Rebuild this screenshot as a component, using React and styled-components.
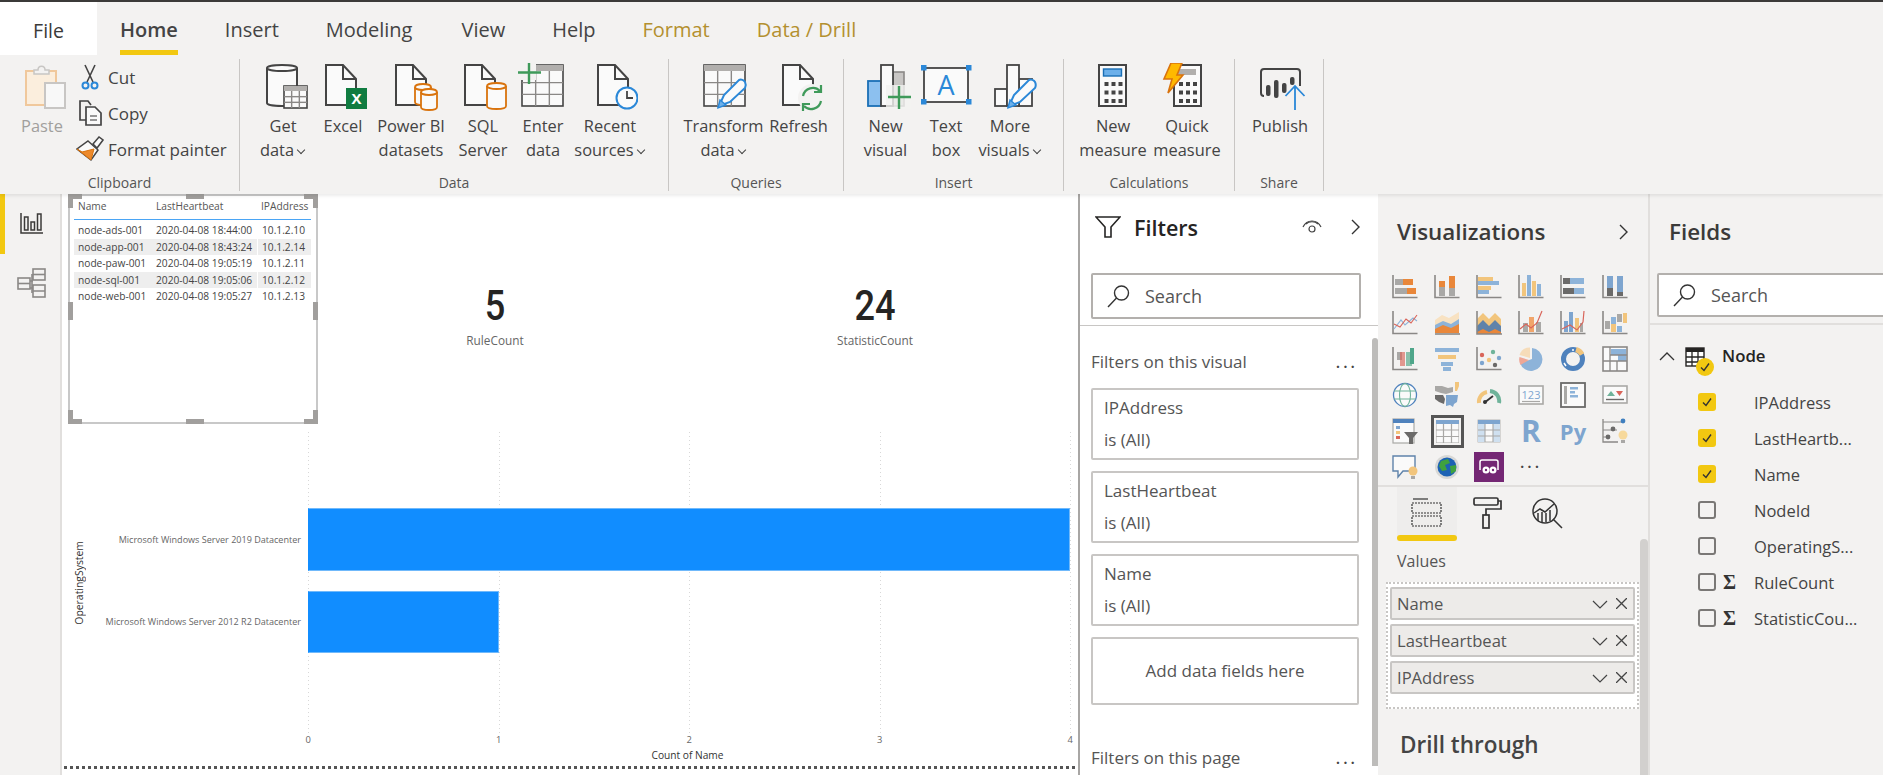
import styled, { createGlobalStyle } from "styled-components";

const GlobalStyle = createGlobalStyle`
  html, body {
    margin: 0;
    padding: 0;
    background: #fff;
    overflow: hidden;
  }
  * {
    box-sizing: border-box;
  }
  body {
    font-family: "Open Sans", "Noto Sans", sans-serif;
    color: #3b3a39;
  }
`;

const Page = styled.div`
  width: 1883px;
  height: 775px;
  display: flex;
  flex-direction: column;
  overflow: hidden;
`;

const Top = styled.header`
  height: 194px;
  background: #f3f2f1;
  border-top: 2px solid #3b3a39;
  box-shadow: 0 2px 3px rgba(0, 0, 0, 0.08);
  position: relative;
  z-index: 2;
`;

const Tabs = styled.nav`
  height: 53px;
  display: flex;
  align-items: stretch;
`;

const FileTab = styled.div`
  width: 97px;
  background: #fff;
  font-size: 19.500px;
  display: flex;
  align-items: center;
  justify-content: center;
  padding-top: 4px;
  margin-right: 23px;
`;

const Tab = styled.div`
  font-size: 20px;
  margin-right: ${(p) => p.$gap || 47}px;
  display: flex;
  align-items: center;
  padding-top: 6px;
  color: ${(p) => (p.$context ? "#b3902f" : "#444")};
  font-weight: ${(p) => (p.$active ? 600 : 400)};
  border-bottom: ${(p) => (p.$active ? "5px solid #f2c811" : "5px solid transparent")};
`;

const Ribbon = styled.div`
  height: 132px;
  margin-top: 4px;
  display: flex;
`;

const Group = styled.section`
  width: ${(p) => p.$w}px;
  border-right: 1px solid #c8c6c4;
  display: flex;
  flex-direction: column;
  height: 132px;
`;

const GroupBody = styled.div`
  flex: 1;
  display: flex;
  padding-left: ${(p) => p.$pad || 0}px;
  padding-top: 4px;
`;

const GroupName = styled.div`
  height: 16px;
  text-align: center;
  font-size: 14px;
  line-height: 16px;
  color: #555;
`;

const Btn = styled.div`
  width: ${(p) => p.$w}px;
  display: flex;
  flex-direction: column;
  align-items: center;
  flex-shrink: 0;
  font-size: 16.400px;
  line-height: 24px;
  text-align: center;
  white-space: nowrap;
  color: ${(p) => (p.$off ? "#a19f9d" : "#444")};
  svg {
    display: block;
    margin-bottom: 3px;
  }
`;

const Caret = styled.span`
  display: inline-block;
  width: 6px;
  height: 6px;
  border-right: 1.5px solid #444;
  border-bottom: 1.5px solid #444;
  transform: rotate(45deg);
  margin: 0 2px 3px 4px;
`;

const SmallStack = styled.div`
  display: flex;
  flex-direction: column;
  margin-top: -4px;
`;

const SmallBtn = styled.div`
  height: 36px;
  display: flex;
  align-items: center;
  font-size: 17px;
  color: #444;
  white-space: nowrap;
  svg {
    width: 28px;
    margin: 0 4px 0 6px;
    flex-shrink: 0;
  }
`;

const Body = styled.main`
  flex: 1;
  display: flex;
  min-height: 0;
`;

const Rail = styled.aside`
  width: 62px;
  background: #f3f2f1;
  border-right: 2px solid #e1dfdd;
  display: flex;
  flex-direction: column;
`;

const RailItem = styled.div`
  height: ${(p) => (p.$active ? 60 : 58)}px;
  display: flex;
  align-items: center;
  justify-content: center;
  border-left: 5px solid ${(p) => (p.$active ? "#f2c811" : "transparent")};
  padding-right: 2px;
`;

const Canvas = styled.div`
  width: 1016px;
  background: #fff;
  display: flex;
  flex-direction: column;
  overflow: hidden;
`;

const TopVisuals = styled.div`
  display: flex;
  height: 230px;
  flex-shrink: 0;
`;

const Frame = styled.div`
  width: 250px;
  height: 230px;
  margin-left: 6px;
  border: 2px solid #c8c8c8;
  position: relative;
  padding: 0 5px 0 4px;
  flex-shrink: 0;
`;

const handlePlaces = {
  tl: "top:-2px;left:-2px;width:14px;height:14px;border-top:5px solid;border-left:5px solid;",
  tr: "top:-2px;right:-2px;width:14px;height:14px;border-top:5px solid;border-right:5px solid;",
  bl: "bottom:-2px;left:-2px;width:14px;height:14px;border-bottom:5px solid;border-left:5px solid;",
  br: "bottom:-2px;right:-2px;width:14px;height:14px;border-bottom:5px solid;border-right:5px solid;",
  t: "top:-2px;left:116px;width:18px;height:5px;background:#a19f9d;",
  b: "bottom:-2px;left:116px;width:18px;height:5px;background:#a19f9d;",
  l: "top:106px;left:-2px;width:5px;height:18px;background:#a19f9d;",
  r: "top:106px;right:-2px;width:5px;height:18px;background:#a19f9d;",
};

const Handle = styled.i`
  position: absolute;
  ${(p) => handlePlaces[p.$at]}
  border-color: #a19f9d;
`;

const TableRow = styled.div`
  display: grid;
  grid-template-columns: 78px 105px 54px;
  height: ${(p) => (p.$head ? 24 : 16.5)}px;
  font-size: 10.2px;
  color: ${(p) => (p.$head ? "#555" : "#444")};
  white-space: nowrap;
  align-items: center;
  ${(p) => p.$head && "border-bottom: 1px solid #4aa5f5; margin-bottom: 2px; padding-bottom: 4px;"}
  background: ${(p) => (p.$shade ? "#eeeeee" : "transparent")};
`;

const Cell = styled.span`
  padding-left: 4px;
  height: 100%;
  display: flex;
  align-items: center;
  border-left: ${(p) => (p.$split ? "1px solid #fff" : "none")};
`;

const Cards = styled.div`
  display: grid;
  grid-template-columns: 354px 406px;
`;

const KpiCard = styled.div`
  padding-top: 87px;
  text-align: center;
`;

const KpiValue = styled.div`
  font-family: "Roboto", sans-serif;
  font-size: 42px;
  font-weight: 500;
  line-height: 50px;
  color: #252423;
  transform: scaleX(0.86);
`;

const KpiLabel = styled.div`
  font-size: 11.800px;
  line-height: 14px;
  margin-top: 2px;
  color: #666;
`;

const Chart = styled.div`
  flex: 1;
  display: flex;
  flex-direction: column;
  padding-top: 8px;
`;

const ChartMain = styled.div`
  height: 301px;
  flex-shrink: 0;
  display: flex;
  position: relative;
`;

const AxisTitle = styled.div`
  width: 34px;
  padding-left: 10px;
  display: flex;
  align-items: center;
  justify-content: flex-start;
  span {
    writing-mode: vertical-rl;
    transform: rotate(180deg);
    font-size: 10.4px;
    color: #333;
  }
`;

const Rows = styled.div`
  flex: 1;
  position: relative;
  padding-top: 76px;
  display: flex;
  flex-direction: column;
  gap: 20px;
`;

const GridLine = styled.i`
  position: absolute;
  top: 0;
  bottom: 0;
  left: ${(p) => 212 + p.$n * 190.5}px;
  width: 1px;
  background: repeating-linear-gradient(180deg, #d8d8d8 0 1px, transparent 1px 4px);
`;

const BarRow = styled.div`
  display: grid;
  grid-template-columns: 205px 1fr;
  column-gap: 7px;
  align-items: center;
  height: 62.5px;
  position: relative;
`;

const BarLabel = styled.div`
  font-size: 9.050px;
  color: #666;
  text-align: right;
  white-space: nowrap;
  direction: rtl;
`;

const Bar = styled.div`
  height: 100%;
  background: #118dff;
  border: 1px solid #70b9fb;
  border-left-color: #118dff;
`;

const Ticks = styled.div`
  display: flex;
  padding-left: 151px;
  height: 14px;
  margin-top: 1px;
`;

const TickItem = styled.div`
  flex: 0 0 190.5px;
  text-align: center;
  font-size: 9.4px;
  line-height: 12px;
  color: #666;
`;

const XTitle = styled.div`
  text-align: center;
  padding-left: 235px;
  font-size: 10.2px;
  line-height: 14px;
  color: #333;
`;

const DotLine = styled.div`
  height: 3px;
  margin: 4px 2px 0 2px;
  background: repeating-linear-gradient(90deg, #555 0 3px, transparent 3px 6px);
`;

const FilterPane = styled.section`
  width: 300px;
  background: #fff;
  border-left: 2px solid #a8a6a4;
  position: relative;
  overflow: hidden;
`;

const FilterHead = styled.div`
  height: 66px;
  display: flex;
  align-items: center;
  padding: 0 14px 0 15px;
`;

const FilterTitle = styled.h2`
  margin: 0 0 0 13px;
  font-size: 21.500px;
  font-weight: 600;
  color: #252423;
  flex: 1;
`;

const EyeGap = styled.span`
  width: 26px;
`;

const SearchBox = styled.div`
  height: ${(p) => p.$h}px;
  margin: ${(p) => p.$margin};
  display: flex;
  align-items: center;
  background: #fff;
  border: 2px solid #b3b0ad;
  border-radius: 2px;
  padding-left: 14px;
  font-size: 18px;
  color: #555;
  svg {
    margin-right: 14px;
  }
`;

const Rule = styled.div`
  height: ${(p) => p.$h || 1}px;
  background: ${(p) => p.$color};
`;

const FilterBody = styled.div`
  padding: 24px 16px 0 11px;
`;

const SectionRow = styled.div`
  height: 22px;
  display: flex;
  justify-content: space-between;
  align-items: center;
  font-size: 17px;
  color: #555;
  padding-right: 4px;
  margin-top: ${(p) => p.$top || 0}px;
  white-space: nowrap;
`;

const Dots = styled.span`
  font-size: 16px;
  font-weight: 600;
  letter-spacing: 3px;
  line-height: 10px;
  padding-top: ${(p) => p.$drop || 0}px;
  margin-bottom: ${(p) => p.$lift || 0}px;
  color: #444;
`;

const FilterCards = styled.div`
  margin-top: 16px;
  display: flex;
  flex-direction: column;
  gap: 11px;
`;

const FilterCard = styled.div`
  height: ${(p) => (p.$add ? 68 : 72)}px;
  width: 268px;
  border: 2px solid #c8c6c4;
  border-radius: 2px;
  padding: ${(p) => (p.$add ? "0" : "2px 11px 0")};
  font-size: 17px;
  line-height: 32px;
  color: #555;
  ${(p) => p.$add && "display:flex;align-items:center;justify-content:center;"}
`;

const ScrollThumb = styled.i`
  position: absolute;
  right: 0;
  top: ${(p) => p.$top}px;
  bottom: ${(p) => p.$bottom || 0}px;
  width: ${(p) => p.$w}px;
  border-radius: 4px 4px 0 0;
  background: ${(p) => p.$color};
`;

const VizPane = styled.section`
  width: 272px;
  background: #f3f2f1;
  border-right: 2px solid #e1dfdd;
  position: relative;
  overflow: hidden;
`;

const PaneHead = styled.div`
  height: 75px;
  display: flex;
  align-items: center;
  justify-content: space-between;
  padding: ${(p) => p.$pad};
`;

const PaneTitle = styled.h2`
  margin: 0;
  font-size: 22.400px;
  font-weight: 600;
  color: #3b3a39;
`;

const VizGrid = styled.div`
  display: grid;
  grid-template-columns: repeat(6, 42px);
  grid-auto-rows: 36px;
  place-items: center;
  padding-left: 6px;
  height: 216px;
`;

const VizCell = styled.div`
  display: flex;
  align-items: center;
  justify-content: center;
  width: ${(p) => (p.$box ? 33 : 30)}px;
  height: ${(p) => (p.$box ? 33 : 30)}px;
  border: ${(p) => (p.$box ? "3px solid #555" : "none")};
  background: ${(p) => (p.$purple ? "#742774" : "transparent")};
`;

const VizLetter = styled.span`
  font-size: ${(p) => p.$size}px;
  font-weight: 700;
  line-height: 30px;
  color: #7ea5cf;
`;

const VizTabs = styled.div`
  height: 54px;
  display: flex;
  padding-left: 19px;
`;

const VizTab = styled.div`
  width: 60px;
  display: flex;
  align-items: center;
  justify-content: center;
  padding-bottom: 2px;
  position: relative;
  background: ${(p) => (p.$active ? "#eeedec" : "transparent")};
  &::after {
    content: "";
    display: ${(p) => (p.$active ? "block" : "none")};
    position: absolute;
    left: 0;
    right: 0;
    bottom: 0;
    height: 6px;
    border-radius: 3px;
    background: #f2c811;
  }
`;

const ValuesLabel = styled.div`
  margin: 10px 0 11px 19px;
  height: 20px;
  font-size: 16px;
  line-height: 20px;
  color: #555;
`;

const DropBox = styled.div`
  margin-left: 8px;
  width: 253px;
  height: 127px;
  background: #fff;
  border: 2px dotted #c8c6c4;
  padding: 3px 2px;
  display: flex;
  flex-direction: column;
  gap: 4px;
`;

const Pill = styled.div`
  height: 33px;
  background: #edebe9;
  border: 2px solid #c8c6c4;
  border-radius: 2px;
  display: flex;
  align-items: center;
  padding: 0 6px 0 5px;
  font-size: 16.600px;
  color: #555;
  span {
    flex: 1;
  }
  svg {
    margin-left: 8px;
  }
`;

const DrillTitle = styled.h3`
  margin: 20px 0 0 22px;
  font-size: 22.500px;
  font-weight: 600;
  color: #444;
`;

const FieldPane = styled.section`
  flex: 1;
  background: #f3f2f1;
  overflow: hidden;
`;

const NodeRow = styled.div`
  height: 36px;
  margin-top: 14px;
  margin-bottom: 9px;
  display: flex;
  align-items: center;
  padding-left: 9px;
  font-size: 16.800px;
  font-weight: 600;
  color: #252423;
  position: relative;
`;

const NodeName = styled.span`
  margin-left: 17px;
  padding-bottom: 3px;
`;

const NodeIcon = styled.div`
  margin-left: 10px;
  position: relative;
  width: 20px;
  height: 20px;
`;

const Badge = styled.div`
  position: absolute;
  right: -9px;
  bottom: -9px;
  width: 18px;
  height: 18px;
  border-radius: 50%;
  background: #f2c811;
  display: flex;
  align-items: center;
  justify-content: center;
`;

const FieldRow = styled.div`
  height: 36px;
  display: flex;
  align-items: center;
  padding-left: 48px;
  font-size: 16.500px;
  color: #444;
  white-space: nowrap;
`;

const Check = styled.div`
  width: 18px;
  height: 18px;
  flex-shrink: 0;
  border-radius: 3px;
  display: flex;
  align-items: center;
  justify-content: center;
  background: ${(p) => (p.$on ? "#f2c811" : "transparent")};
  border: ${(p) => (p.$on ? "none" : "2px solid #7a7876")};
`;

const Sigma = styled.span`
  width: 38px;
  padding-left: 7px;
  font-family: "Liberation Serif", serif;
  font-size: 20px;
  font-weight: 700;
  color: #333;
`;

// ---- icons ----

const INK = "#444";
const ORANGE = "#d9730d";
const BLUE = "#2b88d8";
const GREEN = "#3f9a5a";

const Big = ({ children }) => (
  <svg width="56" height="48" viewBox="0 0 56 48" fill="none">
    {children}
  </svg>
);

const Doc = ({ x }) => (
  <g stroke={INK} strokeWidth="2" fill="#fafafa">
    <path d={`M${x} 2h17l13 14v26h-30z`} />
    <path d={`M${x + 17} 2v14h13`} fill="none" />
  </g>
);

const Cylinder = ({ x, y, w, h, color = ORANGE, fill = "#fafafa", sw = 1.8 }) => (
  <g stroke={color} strokeWidth={sw} fill={fill}>
    <path d={`M${x} ${y + 3}v${h - 6}c0 4 ${w} 4 ${w} 0v-${h - 6}`} />
    <ellipse cx={x + w / 2} cy={y + 3} rx={w / 2} ry="3" />
  </g>
);

const Pencil = ({ x, y }) => (
  <g transform={`translate(${x} ${y})`}>
    <path d="M2 27l5-11L22 1c2-1 5 0 6 2s1 4 0 6L13 23z" fill="#fafafa" stroke={BLUE} strokeWidth="2" />
    <path d="M1 29l2-8 6 5z" fill="#6cb0ea" stroke={BLUE} strokeWidth="1.4" />
  </g>
);

const TableGrid = ({ x, y, w, h, cols, rows, head = 6, line = "#8a8886", frame = INK }) => {
  const inner = [];
  for (let i = 1; i < cols; i++) {
    const lx = x + (w * i) / cols;
    inner.push(<path key={`c${i}`} d={`M${lx} ${y + head}V${y + h}`} />);
  }
  for (let i = 1; i < rows; i++) {
    const ly = y + head + ((h - head) * i) / rows;
    inner.push(<path key={`r${i}`} d={`M${x} ${ly}H${x + w}`} />);
  }
  return (
    <g>
      <rect x={x} y={y} width={w} height={h} fill="#fafafa" stroke={frame} strokeWidth="1.6" />
      <rect x={x} y={y} width={w} height={head} fill="#b1afad" />
      <g stroke={line} strokeWidth="1.4">{inner}</g>
    </g>
  );
};

const CalcKeys = ({ x, y }) => {
  const keys = [];
  for (let r = 0; r < 3; r++) {
    for (let c = 0; c < 3; c++) {
      keys.push(<rect key={`${r}${c}`} x={x + c * 7} y={y + r * 8.5} width="4" height="4" fill="#444" />);
    }
  }
  return <g>{keys}</g>;
};

const PasteIcon = () => (
  <Big>
    <rect x="12" y="8" width="30" height="34" fill="#fbeedd" stroke="#f0c89c" strokeWidth="2" />
    <path d="M20 11V7h4c0-5 7-5 7 0h4v4z" fill="#f3f2f1" stroke="#c8c6c4" strokeWidth="1.5" />
    <rect x="31" y="20" width="20" height="25" fill="#f8f8f8" stroke="#c8c6c4" strokeWidth="2" />
  </Big>
);

const GetDataIcon = () => (
  <Big>
    <Cylinder x={12} y={2} w={30} h={41} color={INK} sw={2} />
    <TableGrid x={29} y={23} w={23} h={22} cols={3} rows={3} head={5} />
  </Big>
);

const ExcelIcon = () => (
  <Big>
    <Doc x={11} />
    <rect x="31" y="25" width="21" height="21" fill="#107c41" />
    <text x="41.5" y="41" textAnchor="middle" fontSize="15" fontWeight="700" fill="#fff" fontFamily="Open Sans">X</text>
  </Big>
);

const DatasetsIcon = () => (
  <Big>
    <Doc x={13} />
    <Cylinder x={32} y={21} w={16} h={21} />
    <Cylinder x={38} y={26} w={16} h={21} />
  </Big>
);

const SqlIcon = () => (
  <Big>
    <Doc x={10} />
    <Cylinder x={32} y={20} w={19} h={26} />
  </Big>
);

const EnterIcon = () => (
  <Big>
    <TableGrid x={7} y={2} w={41} h={41} cols={3} rows={3} head={6} />
    <rect x="3" y="1" width="18" height="16" fill="#f3f2f1" />
    <path d="M3 9.5h23M14 0v21" stroke={GREEN} strokeWidth="2.4" />
  </Big>
);

const RecentIcon = () => (
  <Big>
    <Doc x={16} />
    <circle cx="45" cy="35" r="10.5" fill="#fafafa" stroke={BLUE} strokeWidth="2" />
    <path d="M45 28v7h6" stroke={INK} strokeWidth="1.8" />
  </Big>
);

const TransformIcon = () => (
  <Big>
    <TableGrid x={8} y={2} w={41} h={41} cols={3} rows={3} head={6} />
    <Pencil x={21} y={16} />
  </Big>
);

const RefreshIcon = () => (
  <Big>
    <Doc x={12} />
    <circle cx="41" cy="35" r="14" fill="#f3f2f1" />
    <path d="M32 33a10 10 0 0 1 17-5M50 38a10 10 0 0 1-17 5" stroke={GREEN} strokeWidth="2.2" />
    <path d="M50 22v7h-7M32 48v-7h7" stroke={GREEN} strokeWidth="2.2" />
  </Big>
);

const NewVisualIcon = () => (
  <Big>
    <rect x="10" y="18" width="13" height="25" fill="#8cc0ef" stroke="#1a6fb5" strokeWidth="1.8" />
    <rect x="35" y="9" width="11" height="34" fill="#c8c6c4" stroke="#8a8886" strokeWidth="1.6" />
    <rect x="23" y="2" width="12" height="41" fill="#fafafa" stroke={INK} strokeWidth="1.8" />
    <rect x="28" y="22" width="25" height="24" fill="#f3f2f1" opacity="0.8" />
    <path d="M30 34h23M41 23v23" stroke={GREEN} strokeWidth="2.4" />
  </Big>
);

const TextBoxIcon = () => (
  <Big>
    <rect x="6" y="5" width="44" height="34" fill="#fafafa" stroke={INK} strokeWidth="1.8" />
    <text x="28" y="32" textAnchor="middle" fontSize="27" fill={BLUE} fontFamily="Open Sans">A</text>
    <rect x="3" y="2" width="5.5" height="5.5" fill={BLUE} />
    <rect x="48" y="2" width="5.5" height="5.5" fill={BLUE} />
    <rect x="3" y="36" width="5.5" height="5.5" fill={BLUE} />
    <rect x="48" y="36" width="5.5" height="5.5" fill={BLUE} />
  </Big>
);

const MoreVisualsIcon = () => (
  <Big>
    <g stroke={INK} strokeWidth="1.8" fill="#fafafa">
      <rect x="37" y="16" width="13" height="27" />
      <rect x="13" y="26" width="12" height="17" />
      <rect x="25" y="2" width="12" height="41" />
    </g>
    <Pencil x={25} y={16} />
  </Big>
);

const NewMeasureIcon = () => (
  <Big>
    <rect x="14" y="2" width="27" height="41" fill="#fafafa" stroke={INK} strokeWidth="2" />
    <rect x="18.5" y="6" width="18" height="7" fill="#6cb0ea" stroke="#1a6fb5" strokeWidth="1.4" />
    <CalcKeys x={19.5} y={19} />
  </Big>
);

const QuickMeasureIcon = () => (
  <Big>
    <rect x="15" y="2" width="27" height="41" fill="#fafafa" stroke={INK} strokeWidth="2" />
    <rect x="19" y="6" width="18" height="6" fill="#b1afad" />
    <CalcKeys x={20} y={19} />
    <path d="M12 0h11l-5 12h6L9 30l4-14H5z" fill="#ffb900" stroke={ORANGE} strokeWidth="1.6" />
  </Big>
);

const PublishIcon = () => (
  <Big>
    <path d="M9 30V9q0-3 3-3h33q3 0 3 3v14" stroke={INK} strokeWidth="2" />
    <path d="M9 28v2q0 3 3 3" stroke={INK} strokeWidth="2" />
    <rect x="14" y="22" width="4.5" height="11" rx="2" fill={INK} />
    <rect x="22" y="17" width="4.5" height="18" rx="2" fill={INK} />
    <rect x="30" y="20" width="4.5" height="10" rx="2" fill={INK} />
    <rect x="38" y="14" width="4.5" height="8" rx="2" fill={INK} />
    <path d="M43 47V23M33.500 33l9.500-10 9.500 10" stroke={BLUE} strokeWidth="1.8" />
  </Big>
);

const ScissorsIcon = () => (
  <svg height="26" viewBox="0 0 28 26" fill="none">
    <path d="M9 1l8 17M19 1l-8 17" stroke={INK} strokeWidth="1.6" />
    <circle cx="9.500" cy="21.500" r="3" stroke={BLUE} strokeWidth="2" />
    <circle cx="18.500" cy="21.500" r="3" stroke={BLUE} strokeWidth="2" />
  </svg>
);

const CopyIcon = () => (
  <svg height="26" viewBox="0 0 28 26" fill="none">
    <path d="M12 20H4V1h8l3 4" stroke={INK} strokeWidth="1.7" />
    <path d="M10 7h9l6 6v12H10z" fill="#fafafa" stroke={INK} strokeWidth="1.7" />
    <path d="M14 16h7M14 20h7" stroke="#777" strokeWidth="1.3" />
  </svg>
);

const BrushIcon = () => (
  <svg height="26" viewBox="0 0 28 26" fill="none">
    <path d="M17 8l6-7 4 3-6 8z" fill="#fafafa" stroke={INK} strokeWidth="1.5" />
    <path d="M12 5l10 9-7 10L1 13z" fill="#fafafa" stroke={INK} strokeWidth="1.5" />
    <path d="M6 16l12-3-3 11L1 13z" fill="#ed8a2c" stroke={ORANGE} strokeWidth="1" />
  </svg>
);

const ReportIcon = () => (
  <svg width="24" height="24" viewBox="0 0 24 24" fill="none" stroke="#3b3a39" strokeWidth="1.5">
    <path d="M1 1v20h22" />
    <rect x="4.500" y="5" width="3.500" height="13" />
    <rect x="11" y="10" width="3.500" height="8" />
    <rect x="17.500" y="2" width="3.500" height="16" />
  </svg>
);

const ModelIcon = () => (
  <svg width="30" height="30" viewBox="0 0 30 30" fill="none" stroke="#8a8886" strokeWidth="1.6">
    <rect x="1" y="10" width="12" height="11" />
    <path d="M1 15.500h12" />
    <rect x="16" y="1" width="12" height="11" />
    <path d="M16 6.500h12" />
    <rect x="16" y="17" width="12" height="12" />
    <path d="M16 23h12M13 13h3M13 20h3M15 6v19" />
  </svg>
);

const FunnelIcon = () => (
  <svg width="26" height="22" viewBox="0 0 26 22" fill="none" stroke="#252423" strokeWidth="1.6">
    <path d="M1 1h24l-9 10v10h-6V11z" />
  </svg>
);

const EyeIcon = () => (
  <svg width="20" height="14" viewBox="0 0 20 14" fill="none" stroke="#444" strokeWidth="1.2">
    <path d="M1 7c4-8 14-8 18 0" />
    <path d="M4 4c3-3 9-3 12 0" />
    <circle cx="10" cy="9" r="3" />
  </svg>
);

const Chevron = ({ dir = "right", size = 14, color = "#333", w = 1.4 }) => {
  const paths = {
    right: "M4 1l7 7-7 7",
    up: "M1 11l7-7 7 7",
    down: "M1 5l7 7 7-7",
  };
  return (
    <svg width={size} height={size} viewBox="0 0 16 16" fill="none" stroke={color} strokeWidth={w}>
      <path d={paths[dir]} />
    </svg>
  );
};

const CloseIcon = () => (
  <svg width="11" height="11" viewBox="0 0 11 11" fill="none" stroke="#444" strokeWidth="1.3">
    <path d="M0 0l11 11M11 0L0 11" />
  </svg>
);

const SearchIcon = () => (
  <svg width="24" height="24" viewBox="0 0 24 24" fill="none" stroke="#333" strokeWidth="1.4">
    <circle cx="14.500" cy="9" r="7" />
    <path d="M9.500 14L1 23" />
  </svg>
);

const Tick = ({ size = 10, color = "#333" }) => (
  <svg width={size} height={size} viewBox="0 0 10 10" fill="none" stroke={color} strokeWidth="1.4">
    <path d="M1 5.500l3 3 5-7" />
  </svg>
);

const FieldsTabIcon = () => (
  <svg width="32" height="30" viewBox="0 0 32 30" fill="none" stroke="#333" strokeWidth="1.2" strokeDasharray="2 1">
    <path d="M2 1h15" strokeDasharray="none" />
    <rect x="1" y="5" width="29" height="10" />
    <rect x="1" y="18" width="29" height="10" />
  </svg>
);

const RollerIcon = () => (
  <svg width="30" height="32" viewBox="0 0 30 32" fill="none" stroke="#333" strokeWidth="1.7">
    <rect x="2" y="1" width="24" height="7" rx="1.500" />
    <path d="M26 4h3v8H14v6" />
    <rect x="11" y="18" width="6" height="13" />
  </svg>
);

const AnalyticsIcon = () => (
  <svg width="32" height="32" viewBox="0 0 32 32" fill="none" stroke="#333" strokeWidth="1.5">
    <circle cx="14" cy="14" r="12" />
    <path d="M22 22l9 9M3 16l6-4 5 3 9-8" />
    <path d="M7 16v8M11 15v10M15 16v9M19 13v11" />
  </svg>
);

const TableGlyph = () => (
  <svg width="20" height="20" viewBox="0 0 20 20" fill="none">
    <rect x="1" y="1" width="18" height="18" fill="#fff" stroke="#252423" strokeWidth="1.400" />
    <rect x="1" y="1" width="18" height="4" fill="#252423" />
    <path d="M7 5v14M13 5v14M1 10h18M1 15h18" stroke="#252423" strokeWidth="1.300" />
  </svg>
);

const AX = "#8a8886";
const TAN = "#f2c57c";
const OR = "#e9873a";
const BL = "#8db3d9";
const SL = "#7ea5cf";
const GR = "#a9a8a6";
const DK = "#6b6a69";
const RD = "#d9655a";

const Axes = () => <path d="M1 1v22.500h24.500" stroke={AX} strokeWidth="1.6" fill="none" />;

const V = ({ children }) => (
  <svg width="26" height="26" viewBox="0 0 26 26" fill="none">
    {children}
  </svg>
);

const R = ({ x, y, w, h, c }) => <rect x={x} y={y} width={w} height={h} fill={c} />;

const vizIcons = [
  <V><Axes /><R x={3} y={5} w={8} h={6} c={GR} /><R x={11} y={5} w={10} h={6} c={OR} /><R x={3} y={14} w={12} h={6} c={GR} /><R x={15} y={14} w={9} h={6} c={OR} /></V>,
  <V><Axes /><R x={5} y={13} w={6} h={9} c={GR} /><R x={5} y={7} w={6} h={6} c={OR} /><R x={15} y={14} w={6} h={8} c={GR} /><R x={15} y={2} w={6} h={12} c={OR} /></V>,
  <V><Axes /><R x={2} y={3} w={15} h={4} c={TAN} /><R x={2} y={7} w={21} h={4} c={BL} /><R x={2} y={12} w={13} h={4} c={TAN} /><R x={2} y={16} w={11} h={4} c={BL} /></V>,
  <V><Axes /><R x={4} y={9} w={4} h={13} c={TAN} /><R x={9} y={1} w={4} h={21} c={BL} /><R x={14} y={7} w={4} h={15} c={TAN} /><R x={19} y={10} w={4} h={12} c={BL} /></V>,
  <V><Axes /><R x={3} y={4} w={7} h={6} c={DK} /><R x={10} y={4} w={14} h={6} c={BL} /><R x={3} y={14} w={11} h={6} c={DK} /><R x={14} y={14} w={10} h={6} c={BL} /></V>,
  <V><Axes /><R x={5} y={2} w={6} h={12} c={SL} /><R x={5} y={14} w={6} h={8} c={DK} /><R x={15} y={2} w={6} h={16} c={SL} /><R x={15} y={18} w={6} h={4} c={DK} /></V>,

  <V><Axes /><path d="M2 19l7-9 4 5 8-7 4 3" stroke={BL} strokeWidth="1.100" /><path d="M2 14l6 3 6-8 5 4 6-8" stroke={RD} strokeWidth="1.100" /></V>,
  <V><path d="M1 10l7-5 7 3 10-6v21H1z" fill="#f8e2c2" /><path d="M1 15l8-4 8 3 8-5v14H1z" fill={BL} /><path d="M1 19l8-4 8 3 8-4v9H1z" fill={OR} /><path d="M1 24h25" stroke={AX} strokeWidth="1.600" /></V>,
  <V><path d="M1 9l6-6 6 6 6-6 6 6v15H1z" fill={TAN} /><path d="M1 16l6-6 6 6 6-6 6 6v8H1z" fill="#5f83aa" /><path d="M1 22l6-3 6 3 6-3 6 3v2H1z" fill={OR} /><path d="M1 1v23h25" stroke={AX} strokeWidth="1.600" fill="none" /></V>,
  <V><Axes /><R x={5} y={13} w={5} h={9} c={GR} /><R x={11} y={7} w={5} h={15} c="#f1a56a" /><R x={18} y={12} w={5} h={10} c={GR} /><path d="M2 19l6-5 5 4 6-5 5-12" stroke={RD} strokeWidth="1.200" /></V>,
  <V><Axes /><R x={4} y={11} w={4} h={11} c={SL} /><R x={9} y={2} w={4} h={20} c={SL} /><R x={15} y={8} w={4} h={14} c={TAN} /><R x={20} y={13} w={3} h={9} c={GR} /><path d="M2 19l8-4 7 5 6-8 1-11" stroke={RD} strokeWidth="1.200" /></V>,
  <V><Axes /><R x={3} y={11} w={5} h={8} c={GR} /><R x={9} y={7} w={5} h={7} c={BL} /><R x={9} y={14} w={5} h={8} c={TAN} /><R x={15} y={4} w={5} h={8} c={GR} /><R x={15} y={16} w={5} h={6} c={BL} /><R x={21} y={3} w={4} h={10} c={TAN} /></V>,

  <V><Axes /><R x={5} y={6} w={5} h={8} c={GR} /><path d="M8 6h5v14H8z" fill={RD} opacity=".65" /><path d="M14 6h6v14h-6z" fill="#6fb39a" opacity=".8" /><path d="M18 2h4v16h-4z" fill="#4fa68a" /></V>,
  <V><R x={1} y={2} w={24} h={4} c={BL} /><R x={4} y={9} w={18} h={4} c={TAN} /><R x={7} y={16} w={12} h={4} c={BL} /><R x={9} y={21} w={8} h={4} c={BL} /></V>,
  <V><Axes /><circle cx="6" cy="9" r="2.200" fill={RD} /><circle cx="17" cy="6" r="2.200" fill="#6fb39a" /><circle cx="6" cy="17" r="2.200" fill={SL} /><circle cx="13" cy="14" r="2.200" fill={TAN} /><circle cx="23" cy="12" r="2.200" fill={SL} /><circle cx="19" cy="19" r="2.200" fill={DK} /></V>,
  <V><path d="M14 2a11.500 11.500 0 1 1-12 15l12-4z" fill={BL} /><path d="M12 1.500v10.500L1.500 9A11 11 0 0 1 12 1.500z" fill="#f6dcb9" /><path d="M1.500 11L11 14 2.500 19a11 11 0 0 1-1-8z" fill="#eea796" /></V>,
  <V><circle cx="13" cy="13" r="9.500" stroke="#4f82bd" strokeWidth="5" /><path d="M16 3.500a10 10 0 0 1 6 5" stroke={TAN} strokeWidth="5" /><path d="M4 17l2 3M13 3v2" stroke="#fff" strokeWidth="1.500" /></V>,
  <V><rect x="1" y="1" width="24" height="24" stroke={AX} strokeWidth="1.600" fill="#fafafa" /><R x={9} y={3} w={15} h={6} c={BL} /><R x={16} y={9} w={8} h={6} c={BL} /><path d="M8 1v24M8 9h17M1 15h24M15 15v10" stroke={AX} strokeWidth="1.300" /></V>,

  <V><circle cx="13" cy="13" r="11.500" stroke="#4f82bd" strokeWidth="1.300" fill="#fafafa" /><ellipse cx="13" cy="13" rx="5.500" ry="11.500" stroke="#6fb39a" strokeWidth="1.100" /><path d="M2 9h22M2 17h22" stroke="#6fb39a" strokeWidth="1.100" /></V>,
  <V><path d="M1 4h7l6 2 5-1v5l-7 2-5-1-6-2z" fill={GR} /><path d="M21 0h4v4l-2 5h-2z" fill={TAN} /><path d="M1 13h8l2 4-1 5-5-2-4-3z" fill={DK} /><path d="M12 13h12l-1 7-3 2-1 3-3-2-4 1z" fill={SL} /></V>,
  <V><path d="M3 21a10 10 0 0 1 8-11" stroke={TAN} strokeWidth="4" /><path d="M14 9a10 10 0 0 1 9 12" stroke="#6fb39a" strokeWidth="4" /><path d="M8 21l9-7" stroke="#333" strokeWidth="1.800" /><circle cx="9" cy="20" r="2" fill="#333" /></V>,
  <V><rect x="1" y="4" width="24" height="18" fill="#fafafa" stroke={GR} strokeWidth="1.600" /><text x="13" y="17" textAnchor="middle" fontSize="11" fill={SL} fontFamily="Open Sans">123</text><path d="M4 19.500h18" stroke={GR} strokeWidth="1.200" /></V>,
  <V><rect x="1" y="1" width="24" height="24" fill="#fafafa" stroke={DK} strokeWidth="1.800" /><R x={4} y={4} w={3} h={18} c={GR} /><R x={10} y={5} w={8} h={2.500} c={BL} /><R x={10} y={9} w={5} h={2.500} c={BL} /><R x={10} y={13} w={8} h={2.500} c={BL} /></V>,
  <V><rect x="1" y="4" width="24" height="17" fill="#fafafa" stroke={GR} strokeWidth="1.600" /><path d="M5 14l4-5 4 5z" fill="#6fb39a" /><path d="M14 9h7l-3.500 5z" fill={RD} /><path d="M4 17.500h18" stroke={DK} strokeWidth="1.400" /></V>,

  <V><rect x="1" y="1" width="21" height="24" fill="#fafafa" stroke={GR} strokeWidth="1.200" /><R x={1} y={1} w={21} h={4} c="#4f82bd" /><R x={4} y={8} w={4} h={3} c={SL} /><R x={4} y={13} w={4} h={3} c={TAN} /><R x={4} y={18} w={4} h={3} c={RD} /><path d="M12 14h14l-5 6v6h-4v-6z" fill={DK} /></V>,
  <svg width="23" height="23" viewBox="0 0 23 23"><rect width="23" height="23" fill="#fafafa" stroke={GR} /><R x={0} y={0} w={23} h={4} c={SL} /><path d="M7.500 4v19M15.500 4v19M0 10h23M0 16.500h23" stroke={GR} strokeWidth="1.200" /></svg>,
  <V><rect x="2" y="2" width="22" height="22" fill="#fafafa" stroke={GR} strokeWidth=".8" /><R x={2} y={2} w={22} h={4} c={SL} /><R x={2} y={6} w={7} h={18} c="#cfe0f0" /><R x={17} y={6} w={7} h={18} c="#cfe0f0" /><path d="M9 6v18M17 6v18M2 12h22M2 18h22" stroke={GR} strokeWidth="1.100" /></V>,
  <VizLetter $size={30}>R</VizLetter>,
  <VizLetter $size={22}>Py</VizLetter>,
  <V><path d="M1 1v23h15" stroke={AX} strokeWidth="1.300" /><path d="M1 4h20M1 12h14M1 19h6" stroke={AX} strokeWidth="1" /><circle cx="21" cy="3" r="2.400" fill="#3f7fbf" /><circle cx="11" cy="11" r="2.400" fill={DK} /><circle cx="6" cy="19" r="2.400" fill={DK} /><circle cx="21" cy="17" r="4.500" fill="#f7d99b" /><R x={19} y={22} w={4} h={3} c={GR} /></V>,

  <V><path d="M1 2h22v15H11l-5 6v-6H1z" fill="#fafafa" stroke="#5f83aa" strokeWidth="1.400" /><circle cx="21" cy="17" r="4.500" fill={TAN} /><R x={19} y={22} w={4} h={3} c={GR} /></V>,
  <V><circle cx="13" cy="13" r="12" fill="#d8d8d6" /><circle cx="13" cy="13" r="9.500" fill="#1d62b4" /><path d="M7 7l7-2 2 4-5 2 2 5-5 1-3-5zM16 12l6-1 0 6-5 3z" fill="#3fa23f" /></V>,
  <svg width="22" height="16" viewBox="0 0 22 16" fill="none"><path d="M2 11V3q0-2 2-2h14q2 0 2 2v8" stroke="#fff" strokeWidth="1.500" /><circle cx="8" cy="11" r="3.500" fill="#fff" /><circle cx="15" cy="11" r="3.500" fill="#fff" /><circle cx="8" cy="11" r="1.200" fill="#742774" /><circle cx="15" cy="11" r="1.200" fill="#742774" /></svg>,
  <Dots $lift={10}>...</Dots>,
];

const ribbon = [
  {
    name: "Data", w: 429, pad: 16,
    items: [
      { w: 54, icon: <GetDataIcon />, lines: ["Get", "data"], caret: true },
      { w: 66, icon: <ExcelIcon />, lines: ["Excel"] },
      { w: 70, icon: <DatasetsIcon />, lines: ["Power BI", "datasets"] },
      { w: 74, icon: <SqlIcon />, lines: ["SQL", "Server"] },
      { w: 46, icon: <EnterIcon />, lines: ["Enter", "data"] },
      { w: 88, icon: <RecentIcon />, lines: ["Recent", "sources"], caret: true },
    ],
  },
  {
    name: "Queries", w: 175, pad: 11,
    items: [
      { w: 87, icon: <TransformIcon />, lines: ["Transform", "data"], caret: true },
      { w: 63, icon: <RefreshIcon />, lines: ["Refresh"] },
    ],
  },
  {
    name: "Insert", w: 220, pad: 12,
    items: [
      { w: 59, icon: <NewVisualIcon />, lines: ["New", "visual"] },
      { w: 62, icon: <TextBoxIcon />, lines: ["Text", "box"] },
      { w: 66, icon: <MoreVisualsIcon />, lines: ["More", "visuals"], caret: true },
    ],
  },
  {
    name: "Calculations", w: 171, pad: 11,
    items: [
      { w: 76, icon: <NewMeasureIcon />, lines: ["New", "measure"] },
      { w: 72, icon: <QuickMeasureIcon />, lines: ["Quick", "measure"] },
    ],
  },
  {
    name: "Share", w: 89, pad: 10,
    items: [{ w: 70, icon: <PublishIcon />, lines: ["Publish"] }],
  },
];

const nodes = [
  ["node-ads-001", "2020-04-08 18:44:00", "10.1.2.10"],
  ["node-app-001", "2020-04-08 18:43:24", "10.1.2.14"],
  ["node-paw-001", "2020-04-08 19:05:19", "10.1.2.11"],
  ["node-sql-001", "2020-04-08 19:05:06", "10.1.2.12"],
  ["node-web-001", "2020-04-08 19:05:27", "10.1.2.13"],
];

const fields = [
  { name: "IPAddress", on: true },
  { name: "LastHeartb...", on: true },
  { name: "Name", on: true },
  { name: "NodeId" },
  { name: "OperatingS..." },
  { name: "RuleCount", sum: true },
  { name: "StatisticCou...", sum: true },
];

export default function App() {
  return (
    <Page>
      <GlobalStyle />
      <Top>
        <Tabs>
          <FileTab>File</FileTab>
          <Tab $active>Home</Tab>
          <Tab>Insert</Tab>
          <Tab $gap={49}>Modeling</Tab>
          <Tab>View</Tab>
          <Tab>Help</Tab>
          <Tab $context>Format</Tab>
          <Tab $context>Data / Drill</Tab>
        </Tabs>
        <Ribbon>
          <Group $w={240}>
            <GroupBody $pad={14}>
              <Btn $w={56} $off>
                <PasteIcon />
                Paste
              </Btn>
              <SmallStack>
                <SmallBtn><ScissorsIcon />Cut</SmallBtn>
                <SmallBtn><CopyIcon />Copy</SmallBtn>
                <SmallBtn><BrushIcon />Format painter</SmallBtn>
              </SmallStack>
            </GroupBody>
            <GroupName>Clipboard</GroupName>
          </Group>
          {ribbon.map((g) => (
            <Group key={g.name} $w={g.w}>
              <GroupBody $pad={g.pad}>
                {g.items.map((b) => (
                  <Btn key={b.lines.join()} $w={b.w}>
                    {b.icon}
                    <span>{b.lines[0]}</span>
                    {b.lines[1] && <span>{b.lines[1]}{b.caret && <Caret />}</span>}
                  </Btn>
                ))}
              </GroupBody>
              <GroupName>{g.name}</GroupName>
            </Group>
          ))}
        </Ribbon>
      </Top>

      <Body>
        <Rail>
          <RailItem $active><ReportIcon /></RailItem>
          <RailItem><ModelIcon /></RailItem>
        </Rail>

        <Canvas>
          <TopVisuals>
            <Frame>
              {Object.keys(handlePlaces).map((at) => <Handle key={at} $at={at} />)}
              <TableRow $head>
                <Cell>Name</Cell>
                <Cell>LastHeartbeat</Cell>
                <Cell>IPAddress</Cell>
              </TableRow>
              {nodes.map((n, i) => (
                <TableRow key={n[0]} $shade={i % 2 === 1}>
                  <Cell>{n[0]}</Cell>
                  <Cell>{n[1]}</Cell>
                  <Cell $split>{n[2]}</Cell>
                </TableRow>
              ))}
            </Frame>
            <Cards>
              <KpiCard>
                <KpiValue>5</KpiValue>
                <KpiLabel>RuleCount</KpiLabel>
              </KpiCard>
              <KpiCard>
                <KpiValue>24</KpiValue>
                <KpiLabel>StatisticCount</KpiLabel>
              </KpiCard>
            </Cards>
          </TopVisuals>

          <Chart>
            <ChartMain>
              <AxisTitle><span>OperatingSystem</span></AxisTitle>
              <Rows>
                {[0, 1, 2, 3, 4].map((n) => <GridLine key={n} $n={n} />)}
                <BarRow>
                  <BarLabel>Microsoft Windows Server 2019 Datacenter</BarLabel>
                  <Bar style={{ width: "762px" }} />
                </BarRow>
                <BarRow>
                  <BarLabel>Microsoft Windows Server 2012 R2 Datacenter</BarLabel>
                  <Bar style={{ width: "190.5px" }} />
                </BarRow>
              </Rows>
            </ChartMain>
            <Ticks>
              {[0, 1, 2, 3, 4].map((n) => <TickItem key={n}>{n}</TickItem>)}
            </Ticks>
            <XTitle>Count of Name</XTitle>
            <DotLine />
          </Chart>
        </Canvas>

        <FilterPane>
          <FilterHead>
            <FunnelIcon />
            <FilterTitle>Filters</FilterTitle>
            <EyeIcon />
            <EyeGap />
            <Chevron size={16} />
          </FilterHead>
          <SearchBox $h={46} $margin="13px 17px 6px 11px">
            <SearchIcon />
            Search
          </SearchBox>
          <Rule $color="#c8c6c4" />
          <FilterBody>
            <SectionRow>Filters on this visual<Dots $drop={2}>...</Dots></SectionRow>
            <FilterCards>
              <FilterCard>IPAddress<br />is (All)</FilterCard>
              <FilterCard>LastHeartbeat<br />is (All)</FilterCard>
              <FilterCard>Name<br />is (All)</FilterCard>
              <FilterCard $add>Add data fields here</FilterCard>
            </FilterCards>
            <SectionRow $top={41}>Filters on this page<Dots $drop={2}>...</Dots></SectionRow>
          </FilterBody>
          <ScrollThumb $top={144} $bottom={9} $w={6} $color="#bdbcba" />
        </FilterPane>

        <VizPane>
          <PaneHead $pad="0 16px 0 19px">
            <PaneTitle>Visualizations</PaneTitle>
            <Chevron size={16} />
          </PaneHead>
          <VizGrid>
            {vizIcons.map((icon, i) => (
              <VizCell key={i} $box={i === 25} $purple={i === 32}>{icon}</VizCell>
            ))}
          </VizGrid>
          <Rule $h={2} $color="#e1dfdd" />
          <VizTabs>
            <VizTab $active><FieldsTabIcon /></VizTab>
            <VizTab><RollerIcon /></VizTab>
            <VizTab><AnalyticsIcon /></VizTab>
          </VizTabs>
          <ValuesLabel>Values</ValuesLabel>
          <DropBox>
            {["Name", "LastHeartbeat", "IPAddress"].map((f) => (
              <Pill key={f}>
                <span>{f}</span>
                <Chevron dir="down" size={16} color="#444" w={1.2} />
                <CloseIcon />
              </Pill>
            ))}
          </DropBox>
          <DrillTitle>Drill through</DrillTitle>
          <ScrollThumb $top={345} $w={8} $color="#d2d0ce" />
        </VizPane>

        <FieldPane>
          <PaneHead $pad="0 0 0 19px">
            <PaneTitle>Fields</PaneTitle>
          </PaneHead>
          <SearchBox $h={44} $margin="4px -4px 6px 7px">
            <SearchIcon />
            Search
          </SearchBox>
          <Rule $h={2} $color="#e1dfdd" />
          <NodeRow>
            <Chevron dir="up" size={16} color="#333" w={1.3} />
            <NodeIcon>
              <TableGlyph />
              <Badge><Tick /></Badge>
            </NodeIcon>
            <NodeName>Node</NodeName>
          </NodeRow>
          {fields.map((f) => (
            <FieldRow key={f.name}>
              <Check $on={f.on}>{f.on && <Tick />}</Check>
              <Sigma>{f.sum ? "Σ" : ""}</Sigma>
              {f.name}
            </FieldRow>
          ))}
        </FieldPane>
      </Body>
    </Page>
  );
}
